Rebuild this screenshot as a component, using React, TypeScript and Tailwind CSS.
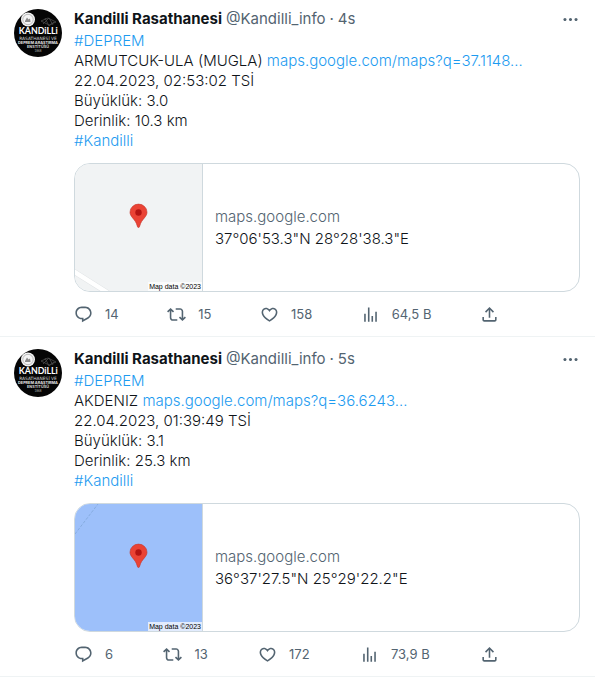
import type { ReactNode } from "react";

type Tweet = {
  id: string;
  age: string;
  place: string;
  url: string;
  date: string;
  magnitude: string;
  depth: string;
  coords: string;
  terrain: "land" | "sea";
  replies: string;
  retweets: string;
  likes: string;
  views: string;
};

const tweets: Tweet[] = [
  {
    id: "armutcuk",
    age: "4s",
    place: "ARMUTCUK-ULA (MUGLA)",
    url: "maps.google.com/maps?q=37.1148…",
    date: "22.04.2023, 02:53:02 TSİ",
    magnitude: "3.0",
    depth: "10.3 km",
    coords: "37°06'53.3\"N 28°28'38.3\"E",
    terrain: "land",
    replies: "14",
    retweets: "15",
    likes: "158",
    views: "64,5 B",
  },
  {
    id: "akdeniz",
    age: "5s",
    place: "AKDENIZ",
    url: "maps.google.com/maps?q=36.6243…",
    date: "22.04.2023, 01:39:49 TSİ",
    magnitude: "3.1",
    depth: "25.3 km",
    coords: "36°37'27.5\"N 25°29'22.2\"E",
    terrain: "sea",
    replies: "6",
    retweets: "13",
    likes: "172",
    views: "73,9 B",
  },
];

const icons = {
  reply:
    "M1.751 10c0-4.42 3.584-8 8.005-8h4.366c4.49 0 8.129 3.64 8.129 8.13 0 2.96-1.607 5.68-4.196 7.11l-8.054 4.46v-3.69h-.067c-4.49.1-8.183-3.51-8.183-8.01zm8.005-6c-3.317 0-6.005 2.69-6.005 6 0 3.37 2.77 6.08 6.138 6.01l.351-.01h1.761v2.3l5.087-2.81c1.951-1.08 3.163-3.13 3.163-5.36 0-3.39-2.744-6.13-6.129-6.13H9.756z",
  retweet:
    "M4.5 3.88l4.432 4.14-1.364 1.46L5.5 7.55V16c0 1.1.896 2 2 2H13v2H7.5c-2.209 0-4-1.79-4-4V7.55L1.432 9.48.068 8.02 4.5 3.88zM16.5 6H11V4h5.5c2.209 0 4 1.79 4 4v8.45l2.068-1.93 1.364 1.46-4.432 4.14-4.432-4.14 1.364-1.46 2.068 1.93V8c0-1.1-.896-2-2-2z",
  like: "M16.697 5.5c-1.222-.06-2.679.51-3.89 2.16l-.805 1.09-.806-1.09C9.984 6.01 8.526 5.44 7.304 5.5c-1.243.07-2.349.78-2.91 1.91-.552 1.12-.633 2.78.479 4.82 1.074 1.97 3.257 4.27 7.129 6.61 3.87-2.34 6.052-4.64 7.126-6.61 1.111-2.04 1.03-3.7.477-4.82-.561-1.13-1.666-1.84-2.908-1.91zm4.187 7.69c-1.351 2.48-4.001 5.12-8.379 7.67l-.503.3-.504-.3c-4.379-2.55-7.029-5.19-8.382-7.67-1.36-2.5-1.41-4.86-.514-6.67.887-1.79 2.647-2.91 4.601-3.01 1.651-.09 3.368.56 4.798 2.01 1.429-1.45 3.146-2.1 4.796-2.01 1.954.1 3.714 1.22 4.601 3.01.896 1.81.846 4.17-.514 6.67z",
  views: "M8.75 21V3h2v18h-2zM18 21V8.5h2V21h-2zM4 21l.004-10h2L6 21H4zm9.248 0v-7h2v7h-2z",
  share:
    "M12 2.59l5.7 5.7-1.41 1.42L13 6.41V16h-2V6.41l-3.3 3.3-1.41-1.42L12 2.59zM21 15l-.02 3.51c0 1.38-1.12 2.49-2.5 2.49H5.5C4.11 21 3 19.88 3 18.5V15h2v3.5c0 .28.22.5.5.5h12.98c.28 0 .5-.22.5-.5L19 15h2z",
  more: "M3 12c0-1.1.9-2 2-2s2 .9 2 2-.9 2-2 2-2-.9-2-2zm9 2c1.1 0 2-.9 2-2s-.9-2-2-2-2 .9-2 2 .9 2 2 2zm7 0c1.1 0 2-.9 2-2s-.9-2-2-2-2 .9-2 2 .9 2 2 2z",
};

function Icon({ name }: { name: keyof typeof icons }) {
  return (
    <svg viewBox="0 0 24 24" className="size-[19px] shrink-0 fill-current" aria-hidden="true">
      <path d={icons[name]} />
    </svg>
  );
}

function Avatar() {
  return (
    <svg viewBox="0 0 48 48" className="size-12 shrink-0" role="img" aria-label="Kandilli Rasathanesi">
      <circle cx="24" cy="24" r="24" fill="#050505" />
      <circle cx="14" cy="10.500" r="7" fill="#f4f4f4" />
      <circle cx="14" cy="10.500" r="5.200" fill="none" stroke="#a3a3a3" strokeWidth="0.7" />
      <path d="M11 12l2-3.500 1.500 2 1.500-1 .5 3.500h-5.500z" fill="#8a8a8a" />
      <g fill="none" stroke="#4b4b4b" strokeWidth="0.8">
        <path d="M27 12l7-3 8 4-7 3z" />
        <path d="M29 15l6-6 4 7M31 9l4 8 5-4" />
      </g>
      <g fill="#fff" textAnchor="middle" fontFamily="Lato, sans-serif">
        <text x="24.3" y="25.4" fontSize="8.8" fontWeight="700">KANDiLLi</text>
        <text x="24" y="31.2" fontSize="4.4" fill="#d4d4d4" fontFamily="DejaVu Sans, sans-serif">RASATHANESİ VE</text>
        <text x="24" y="35" fontSize="3.800" fontWeight="700" fill="#e8e8e8" fontFamily="Inter, sans-serif">DEPREM ARAŞTIRMA</text>
        <text x="24" y="38.8" fontSize="3.800" fontWeight="700" fill="#dcdcdc" fontFamily="Inter, sans-serif">ENSTİTÜSÜ</text>
        <text x="24" y="43" fontSize="3" fill="#b4b4b4">1868</text>
      </g>
    </svg>
  );
}

function MapThumb({ terrain }: { terrain: Tweet["terrain"] }) {
  const sea = terrain === "sea";
  return (
    <div className="relative w-[127px] shrink-0 self-stretch">
      <svg viewBox="0 0 127 127" className="size-full" aria-hidden="true">
        <rect width="127" height="127" fill={sea ? "#9dc0fa" : "#f1f3f4"} />
        {sea ? (
          <path d="M0 30L23 0" stroke="#80a7d8" strokeWidth="0.8" strokeDasharray="3 1.5" />
        ) : (
          <>
            <path d="M-2 107L33 129" stroke="#dfe2e4" strokeWidth="5.500" />
            <path d="M-2 107L33 129" stroke="#fff" strokeWidth="4.500" />
          </>
        )}
        <path
          d="M63.500 63.500c-.7 0-1-.6-1.200-1.300-.9-4-2.700-5.800-4.700-8.300-1.700-2.100-2.600-3.600-2.600-5.700a8.500 8.100 0 0 1 17 0c0 2.100-.9 3.600-2.600 5.700-2 2.500-3.800 4.300-4.700 8.300-.2.700-.5 1.300-1.200 1.300z"
          fill="#ea4335"
          stroke="#c5362b"
          strokeWidth="0.6"
        />
        <circle cx="63.500" cy="48.500" r="3.200" fill="#b31412" />
      </svg>
      <span className="absolute right-0 bottom-0 bg-white/70 px-px font-['Liberation_Sans',sans-serif] text-[7px] leading-[9px] font-normal text-black">
        Map data ©2023
      </span>
    </div>
  );
}

function Action({ label, icon, count }: { label: string; icon: keyof typeof icons; count?: string }) {
  return (
    <button type="button" aria-label={label} className="flex h-5 items-center gap-3 text-[13px] leading-4">
      <Icon name={icon} />
      {count && <span>{count}</span>}
    </button>
  );
}

function Link({ children }: { children: ReactNode }) {
  return (
    <a href="#" className="text-[#1d9bf0]">
      {children}
    </a>
  );
}

function TweetItem({ tweet }: { tweet: Tweet }) {
  return (
    <article className="flex gap-3 border-b border-[#eff3f4] pt-3 pr-[15px] pb-3 pl-[14px] first:pt-[9px]">
      <Avatar />
      <div className="min-w-0 flex-1">
        <header className="flex h-5 items-center justify-between text-[#536471]">
          <div className="flex gap-1 whitespace-nowrap">
            <a href="#" className="font-bold text-[#0f1419]">Kandilli Rasathanesi</a>
            <span>@Kandilli_info</span>
            <span>·</span>
            <time>{tweet.age}</time>
          </div>
          <button type="button" aria-label="More">
            <Icon name="more" />
          </button>
        </header>
        <div className="mt-0.5 font-light">
          <p><Link>#DEPREM</Link></p>
          <p>{tweet.place} <Link>{tweet.url}</Link></p>
          <p>{tweet.date}</p>
          <p>Büyüklük: {tweet.magnitude}</p>
          <p>Derinlik: {tweet.depth}</p>
          <p><Link>#Kandilli</Link></p>
        </div>
        <a href="#" className="mt-3 flex h-[129px] items-center overflow-hidden rounded-2xl border border-[#cfd9de]">
          <MapThumb terrain={tweet.terrain} />
          <div className="flex flex-1 flex-col justify-center gap-0.5 self-stretch border-l border-[#cfd9de] px-3 font-light">
            <span className="text-[#536471]">maps.google.com</span>
            <span>{tweet.coords}</span>
          </div>
        </a>
        <div className="mt-3 flex max-w-[425px] justify-between text-[#536471]">
          <Action label="Reply" icon="reply" count={tweet.replies} />
          <Action label="Retweet" icon="retweet" count={tweet.retweets} />
          <Action label="Like" icon="like" count={tweet.likes} />
          <Action label="Views" icon="views" count={tweet.views} />
          <Action label="Share" icon="share" />
        </div>
      </div>
    </article>
  );
}

export default function App() {
  return (
    <main className="min-h-screen bg-white font-[Inter,sans-serif] text-[15px] leading-5 text-[#0f1419]">
      {tweets.map((tweet) => (
        <TweetItem key={tweet.id} tweet={tweet} />
      ))}
    </main>
  );
}
